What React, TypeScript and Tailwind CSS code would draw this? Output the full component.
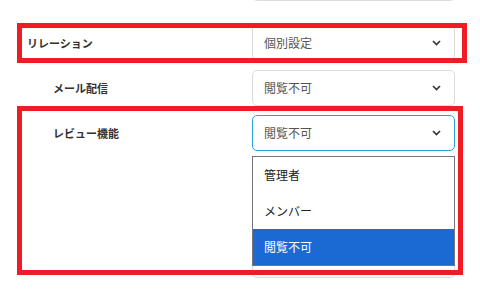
import React from 'react';

const font = { fontFamily: '"Noto Sans CJK JP", "Noto Sans", sans-serif' };

function Chevron() {
  return (
    <svg width="9" height="6" viewBox="0 0 9 6" className="shrink-0">
      <path d="M1 1 L4.5 4.5 L8 1" fill="none" stroke="#333" strokeWidth="1.6" />
    </svg>
  );
}

function SelectBox({ value, focused = false }: { value?: string; focused?: boolean }) {
  return (
    <div
      className={`w-[203px] h-[36px] flex items-center justify-between pl-[11px] pr-[13px] rounded-[5px] border bg-white ${
        focused ? 'border-[#29a3e0]' : 'border-[#dcdcdc]'
      }`}
    >
      <span className="text-[12px] text-[#555]">{value}</span>
      {value && <Chevron />}
    </div>
  );
}

function Row({ label, indent, value, focused }: { label?: string; indent?: boolean; value?: string; focused?: boolean }) {
  return (
    <div className="flex items-center h-[36px]">
      <div className={`w-[252px] text-[11px] font-bold text-[#333] ${indent ? 'pl-[53px]' : 'pl-[27px]'}`}>{label}</div>
      <SelectBox value={value} focused={focused} />
    </div>
  );
}

export default function App() {
  const options = ['管理者', 'メンバー', '閲覧不可'];

  return (
    <div className="relative w-[480px] h-[296px] overflow-hidden bg-white" style={font}>
      <div className="flex flex-col">
        <div className="mt-[-35px]">
          <Row value="" />
        </div>
        <div className="mt-[24px]">
          <Row label="リレーション" value="個別設定" />
        </div>
        <div className="mt-[9px]">
          <Row label="メール配信" indent value="閲覧不可" />
        </div>
        <div className="mt-[9px]">
          <Row label="レビュー機能" indent value="閲覧不可" focused />
        </div>
        <div className="mt-[91px]">
          <Row value="" />
        </div>
      </div>

      {/* dropdown list */}
      <div className="absolute left-[252px] top-[156px] w-[203px] border border-[#767676] bg-white z-10">
        {options.map(o => (
          <div
            key={o}
            className={`h-[36px] flex items-center pl-[11px] text-[12px] ${
              o === '閲覧不可' ? 'bg-[#1b69d3] text-white' : 'text-[#222]'
            }`}
          >
            {o}
          </div>
        ))}
      </div>

      {/* annotation boxes */}
      <div className="absolute left-[17px] top-[23px] w-[450px] h-[40px] border-[5px] border-[#ee1c25] z-20" />
      <div className="absolute left-[17px] top-[106px] w-[446px] h-[169px] border-[5px] border-[#ee1c25] z-20" />
    </div>
  );
}
